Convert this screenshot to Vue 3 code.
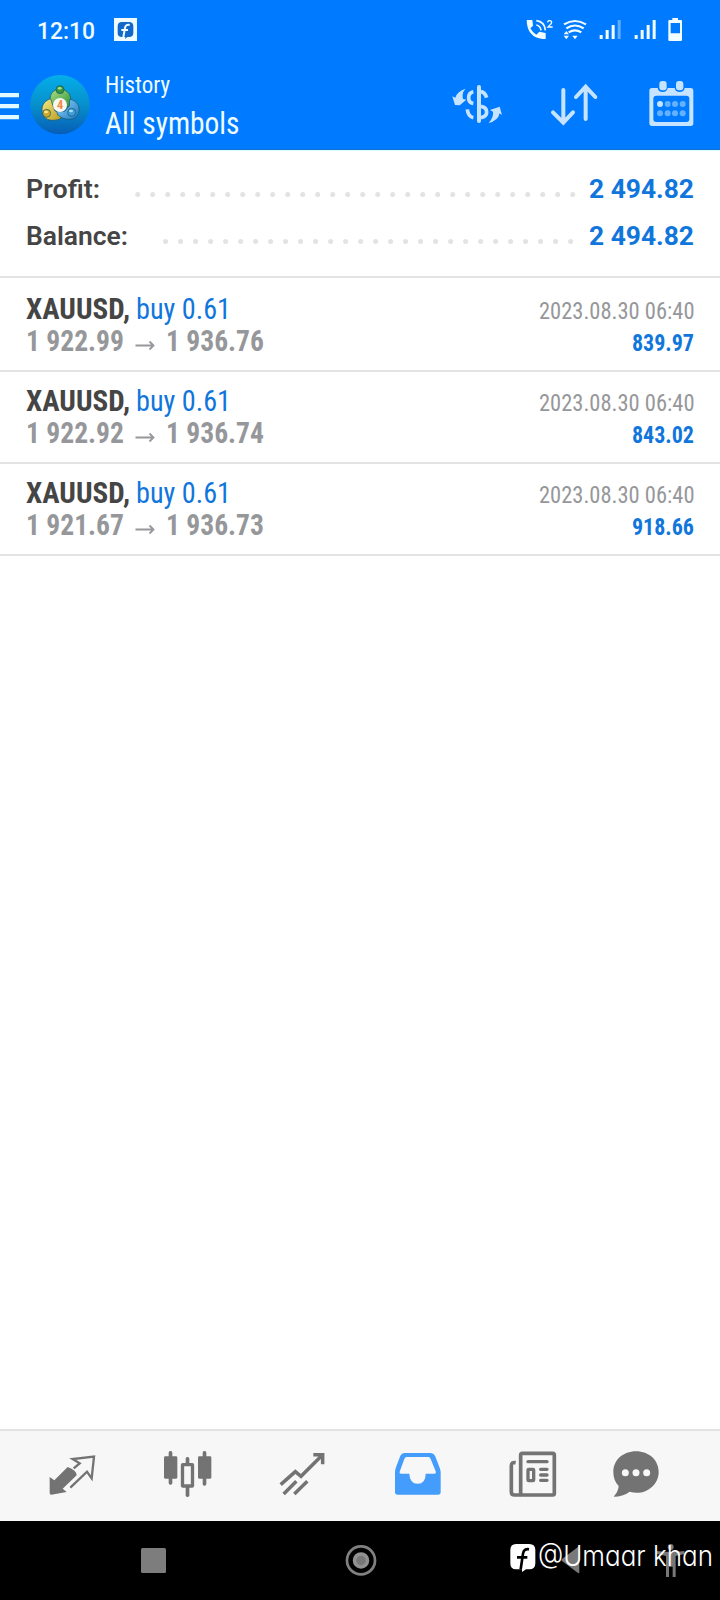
<script setup>
import { h } from 'vue'

const trades = [
  { open: '1 922.99', close: '1 936.76', time: '2023.08.30 06:40', profit: '839.97' },
  { open: '1 922.92', close: '1 936.74', time: '2023.08.30 06:40', profit: '843.02' },
  { open: '1 921.67', close: '1 936.73', time: '2023.08.30 06:40', profit: '918.66' }
]

// Single line of text fitted to a fixed advance width (condensed lettering).
const Fit = (p) =>
  h('svg', { width: p.w + 1, height: p.h, class: 'fit' }, [
    h('text', {
      x: 0, y: p.b, 'font-size': p.size, 'font-weight': p.weight || 400,
      textLength: p.w, lengthAdjust: 'spacingAndGlyphs', fill: 'currentColor'
    }, p.t)
  ])
Fit.props = ['t', 'w', 'h', 'b', 'size', 'weight']
</script>

<template>
  <div class="screen">
    <header class="header">
      <div class="status">
        <Fit class="clock normal" t="12:10" :w="58" :h="60" :b="39" :size="23" :weight="500" />
        <svg class="fb" width="23" height="60" viewBox="342 0 69 180">
          <rect x="342" y="54" width="69" height="69" fill="#effcff" />
          <path d="M366 66h21q13 0 13 13v19q0 13-13 13h-5l-6 6v-6h-10q-13 0-13-13V79q0-13 13-13z" fill="#1268c8" />
          <path d="M389 75q-12-3-14 9l-5 27M364 90h20" fill="none" stroke="#effcff" stroke-width="6" />
        </svg>
        <svg class="status-icons" width="163.33" height="60" viewBox="280 0 490 180" fill="#f2fdff">
          <path d="M291 60h17l2 17-8 8q7 13 18 19l9-9 19 4v18h-9q-47-5-48-57z" />
          <g fill="none" stroke="#f2fdff" stroke-width="5">
            <path d="M320 75q12 2 14 16M320 62q25 3 27 29" />
            <path d="M403 73q33-20 66 0M410 85q26-17 52 0M417 97q19-12 38 0" stroke-width="6.5" />
            <path d="M354 67q1-6 7-5 7 2 4 8l-10 11h14" stroke-width="4" />
          </g>
          <path d="M402 103l8-10 8 10zM402 107h16l-8 11zM428 107h16l-8 11z" />
          <path d="M510 105h9v12h-9zM528 90h9v27h-9zM546 75h9v42h-9z" />
          <path d="M564 60h9v57h-9z" opacity=".4" />
          <path d="M615 105h9v12h-9zM633 90h9v27h-9zM651 75h9v42h-9zM669 60h9v57h-9z" />
          <path fill-rule="evenodd" d="M728 54h17v6h9q3 0 3 3v57q0 3-3 3h-35q-3 0-3-3V63q0-3 3-3h9zM723 69v31h28V69z" />
        </svg>
      </div>
      <div class="toolbar">
        <svg width="100" height="90" viewBox="0 180 300 270">
          <defs>
            <linearGradient id="disc" x1="0" y1="0" x2="0" y2="1">
              <stop offset="0" stop-color="#05aee8" /><stop offset=".5" stop-color="#0790cc" /><stop offset="1" stop-color="#075db6" />
            </linearGradient>
            <linearGradient id="green" x1="0" y1="0" x2="1" y2="1"><stop stop-color="#b0df83" /><stop offset="1" stop-color="#28913a" /></linearGradient>
            <linearGradient id="gold" x1="0" y1="0" x2="1" y2="1"><stop stop-color="#f5eb82" /><stop offset="1" stop-color="#b99c20" /></linearGradient>
            <linearGradient id="sky" x1="0" y1="0" x2="1" y2="1"><stop stop-color="#9bd8f8" /><stop offset="1" stop-color="#1776c4" /></linearGradient>
          </defs>
          <path d="M0 279h57v13H0zM0 312h57v13H0zM0 345h57v13H0z" fill="#e2faff" />
          <circle cx="180" cy="314" r="89" fill="url(#disc)" />
          <g stroke="#17536a" stroke-width="2">
            <path d="M151 318c-5-35 6-50 29-50s37 17 32 47l-13 8-7-21h-24l-6 18z" fill="url(#green)" />
            <path d="M152 296c-22 7-31 26-23 47 6 19 29 22 53 13l4-18-21-5-7-18z" fill="url(#gold)" />
            <path d="M209 298c24 4 33 24 26 43-8 22-39 22-62 4l-3-12 24 1 14-16z" fill="url(#sky)" />
            <circle cx="180" cy="269" r="12" fill="#35963a" />
            <circle cx="140" cy="340" r="12" fill="#cda82b" />
            <circle cx="215" cy="337" r="12" fill="#3e9ed6" />
          </g>
          <ellipse cx="179" cy="265" rx="6" ry="4" fill="#a8da8d" />
          <ellipse cx="138" cy="336" rx="6" ry="4" fill="#f8e98b" />
          <ellipse cx="213" cy="333" rx="6" ry="4" fill="#a4def9" />
          <circle cx="180" cy="315" r="21" fill="#f8f7f3" />
          <text x="180" y="328" text-anchor="middle" font-size="37" font-weight="700" fill="#ef8b43">4</text>
        </svg>
        <div class="titles">
          <Fit t="History" :w="65" :h="40" :b="33" :size="24" :weight="450" />
          <Fit t="All symbols" :w="134.5" :h="50" :b="33.7" :size="32" :weight="450" />
        </div>
        <div class="actions">
          <svg width="53.33" height="90" viewBox="60 180 160 270" fill="none" stroke="#c6e4ff" stroke-width="11">
            <path d="M147 261v102" stroke-width="12" stroke-linecap="round" />
            <path d="M130 275q-14 3-14 18t14 17M112 328q2 21 18 25M153 275q12 2 17 18M153 319q17 3 17 17t-17 17" />
            <path d="M67 289l9 4q6-20 31-27-13 12-8 31l10 2-20 17-14-1zM216 345l-7-25-29 10 9 5q3 15-13 34 28-6 33-29z" fill="#c6e4ff" stroke="none" />
          </svg>
          <svg width="46.67" height="90" viewBox="365 180 140 270" fill="none" stroke="#c6e4ff" stroke-width="12" stroke-linecap="round">
            <path d="M399 270v98M368 337l31 31 29-31M466 357V260M437 291l29-31 29 31" />
          </svg>
          <svg width="48.33" height="90" viewBox="650 180 145 270" fill="#c6e4ff">
            <path fill-rule="evenodd" d="M665 264h17q2 12 15 12t15-12h21q2 12 15 12t15-12h18q8 0 8 8v98q0 8-8 8H665q-8 0-8-8v-98q0-8 8-8zM678 287q-9 0-9 9v61q0 9 9 9h90q9 0 9-9v-61q0-9-9-9z" />
            <rect x="687" y="243" width="22" height="28" rx="9" />
            <rect x="737" y="243" width="22" height="28" rx="9" />
            <circle cx="689" cy="312" r="9" />
            <g fill="#63b1ff"><circle cx="712" cy="312" r="9" /><circle cx="734" cy="312" r="9" /><circle cx="757" cy="312" r="9" /><circle cx="689" cy="340" r="9" /><circle cx="712" cy="340" r="9" /><circle cx="734" cy="340" r="9" /><circle cx="757" cy="340" r="9" /></g>
          </svg>
        </div>
      </div>
    </header>

    <section class="summary">
      <div class="sum-row">
        <Fit class="dark normal" t="Profit:" :w="74" :h="47" :b="47" :size="26" :weight="600" />
        <svg class="dots" width="440" height="47"><circle v-for="n in 30" :key="n" :cx="n * 15 - 12.3" cy="43.4" r="2.5" /></svg>
        <Fit class="blue normal" t="2 494.82" :w="105" :h="47" :b="47" :size="26" :weight="700" />
      </div>
      <div class="sum-row">
        <Fit class="dark normal" t="Balance:" :w="102" :h="47" :b="47" :size="26" :weight="600" />
        <svg class="dots" width="412" height="47"><circle v-for="n in 28" :key="n" :cx="n * 15 - 12.4" cy="43.4" r="2.5" /></svg>
        <Fit class="blue normal" t="2 494.82" :w="105" :h="47" :b="47" :size="26" :weight="700" />
      </div>
    </section>

    <main class="list">
      <article v-for="(trade, i) in trades" :key="i" class="trade">
        <div class="line">
          <Fit class="dark" t="XAUUSD," :w="104" :h="47" :b="39" :size="30" :weight="700" />
          <Fit class="blue buy" t="buy 0.61" :w="95" :h="47" :b="38.7" :size="30" />
          <Fit class="gray right" :t="trade.time" :w="155.5" :h="47" :b="39" :size="24" />
        </div>
        <div class="line">
          <Fit class="gray" :t="trade.open" :w="98" :h="43" :b="24" :size="30" :weight="700" />
          <svg class="arrow" width="20" height="43" viewBox="0 0 20 43"><path d="M.5 18.5h18M14.5 14.5l4 4-4 4" /></svg>
          <Fit class="gray" :t="trade.close" :w="98" :h="43" :b="24" :size="30" :weight="700" />
          <Fit class="blue right" :t="trade.profit" :w="62" :h="43" :b="24" :size="24" :weight="700" />
        </div>
      </article>
    </main>

    <nav class="tabs">
      <svg width="60" height="90" viewBox="37 33 180 270">
        <path d="M60 171l14 10 40-40q27 10 27 25l-42 40 12 10-46 8q-5 0-5-5z" fill="#737373" />
        <path d="M132 145l18-15-21-13 64-7-7 65-14-20-50 48" fill="none" stroke="#737373" stroke-width="7" />
      </svg>
      <svg width="60" height="90" viewBox="384 34 180 270" fill="#737373">
        <rect x="402" y="110" width="40" height="67" rx="4" /><rect x="416" y="94" width="11" height="101" rx="5" />
        <rect x="504" y="110" width="40" height="67" rx="4" /><rect x="518" y="94" width="11" height="104" rx="5" />
        <rect x="467" y="112" width="11" height="25" rx="5" /><rect x="467" y="198" width="11" height="34" rx="5" />
        <rect x="457.5" y="135" width="30" height="64" rx="1" fill="none" stroke="#737373" stroke-width="10" />
      </svg>
      <svg width="60" height="90" viewBox="729 33 180 270" fill="none" stroke="#737373" stroke-width="10.5">
        <path d="M752 194l44-39 17 14 62-62M850 104h28v29M761 222l38-38M793 222l39-38" />
      </svg>
      <svg width="60" height="90" viewBox="54 33 180 270">
        <path fill="#449cfc" fill-rule="evenodd" d="M103 99h79q9 0 13 8l14 36q3 7 3 15v58q0 8-8 8H83q-8 0-8-8v-58q0-9 3-16l13-35q4-8 12-8zM110 111q-5 0-7 6l-14 38q-2 6 4 6h25q1 30 25 30t24-30h26q6 0 4-7l-15-37q-2-6-7-6z" />
      </svg>
      <svg width="60" height="90" viewBox="400 33 180 270" fill="none" stroke="#737373" stroke-width="11">
        <rect x="453" y="100" width="101" height="125" rx="5" />
        <path d="M438 128q-13-2-13 9v78q0 10 10 10h20" />
        <path d="M475 125h57M513 148h19M513 165h19M513 181h19" stroke-width="10" stroke-linecap="round" />
        <rect x="475" y="148" width="17" height="34" stroke-width="10" rx="2" />
      </svg>
      <svg class="last" width="60" height="90" viewBox="708 33 180 270">
        <path d="M798 94c39 0 68 26 68 62 0 42-43 73-87 59-13 10-31 15-47 15-3-1 12-9 14-32-11-11-16-25-16-42 0-36 29-62 68-62z" fill="#737373" />
        <g fill="#f7f7f7"><circle cx="766" cy="158" r="10.5" /><circle cx="798" cy="158" r="10.5" /><circle cx="830" cy="158" r="10.5" /></g>
      </svg>
    </nav>

    <footer class="system">
      <svg width="25" height="79"><rect y="27" width="25" height="25" rx="1.5" fill="#7d7d7d" /></svg>
      <svg class="home" width="32" height="79"><g fill="none" stroke="#808080"><circle cx="16" cy="39.4" r="14" stroke-width="2.7" /><circle cx="16" cy="39.4" r="6.5" fill="#777" stroke="#919191" stroke-width="3.5" /></g></svg>
      <svg class="back" width="20" height="79" viewBox="244 33 60 237"><path d="M247 147l48-36q4-2 4 3v72q0 5-4 3l-48-36q-4-3 0-6z" fill="#797979" /></svg>
      <svg class="person" width="30" height="79" viewBox="528 33 90 237" fill="#777"><circle cx="572" cy="111" r="9" /><path d="M531 123q41 6 82 0v9l-26 6v63h-9v-31h-11v31h-9v-63l-27-6z" /></svg>
      <div class="watermark">
        <svg width="26" height="79" viewBox="90 33 78 237">
          <path d="M108 102h40q18 0 18 18v40q0 18-18 18h-10l-12 8v-8h-18q-17 0-17-18v-40q0-18 17-18z" fill="#fff" />
          <path d="M147 118q-15-3-18 13l-7 47M111 142h31" fill="none" stroke="#000" stroke-width="8" />
        </svg>
        <Fit class="mark" t="@Umaar khan" :w="175" :h="79" :b="44.5" :size="28.5" :weight="350" />
      </div>
    </footer>
  </div>
</template>

<style>
body { background: #fff; }
</style>
<style scoped>
.screen { width: 720px; height: 1600px; display: flex; flex-direction: column; background: #fff; overflow: hidden; font-family: "Roboto Condensed", Roboto, "Liberation Sans", sans-serif; font-stretch: 75%; }
svg { display: block; flex: none; overflow: visible; }
.header { height: 149px; flex: none; background: #007bff; color: #effcff; border-bottom: 1px solid #1671cd; }
.status { display: flex; height: 60px; padding-left: 37px; }
.normal { font-stretch: 100%; font-family: Roboto, sans-serif; }
.fb { margin-left: 18px; }
.status-icons { margin-left: auto; margin-right: 33.3px; }
.toolbar { display: flex; height: 89px; }
.titles { margin-left: 4.5px; }
.actions { display: flex; gap: 48.33px; margin-left: auto; margin-right: 25px; }
.summary { height: 125px; flex: none; border-top: 1px solid #dcfcff; border-bottom: 2px solid #e3e3e3; }
.sum-row { display: flex; height: 47px; padding: 0 25px; align-items: flex-start; }
.sum-row .dark { position: relative; left: 0.8px; }
.dots { fill: #e3e3e3; margin-left: 35px; margin-right: 14px; }
.list { padding-top: 2px; flex: 1; }
.trade { height: 90px; border-bottom: 2px solid #e3e3e3; }
.line { display: flex; padding: 0 25px 0 26px; }
.right { margin-left: auto; }
.buy { margin-left: 4.5px; }
.arrow { margin: 0 11px 0 9.5px; fill: none; stroke: #96979a; stroke-width: 1.8; }
.dark { color: #454545; }
.blue { color: #1176dc; }
.gray { color: #96979a; }
.tabs { flex: none; display: flex; gap: 55.25px; height: 90px; padding-left: 42.3px; background: #f7f7f7; border-top: 2px solid #e3e3e3; }
.last { margin-left: -12.3px; }
.system { position: relative; flex: none; display: flex; height: 79px; padding-left: 141px; background: #000; }
.home { margin-left: 178.5px; }
.back { margin-left: 184.8px; }
.person { margin-left: 74.7px; }
.watermark { position: absolute; left: 510px; top: 0; display: flex; gap: 2px; color: #fff; }
.mark { font-family: Inter, sans-serif; font-stretch: 100%; font-feature-settings: "cv11" 1; }
</style>
